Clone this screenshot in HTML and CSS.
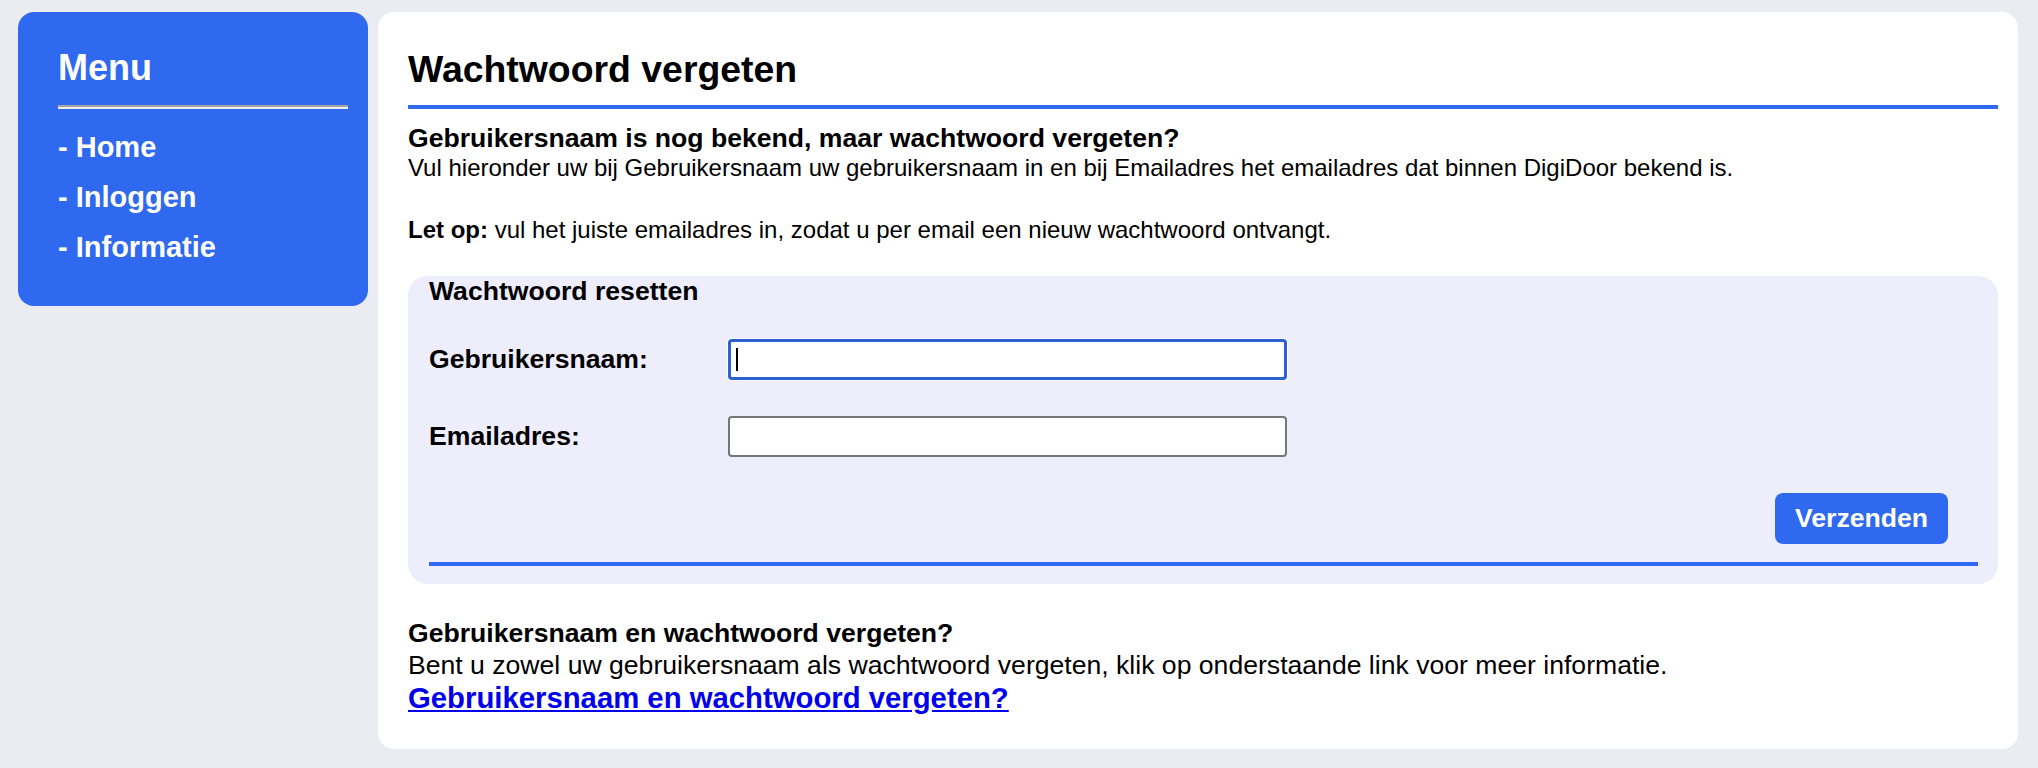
FILE: index.html
```html
<!DOCTYPE html>
<html lang="nl">
<head>
  <meta charset="UTF-8" />
  <title>Wachtwoord vergeten</title>
  <link rel="stylesheet" href="styles.css">
</head>
<body>

<nav class="sidebar">
  <h2>Menu</h2>
  <hr />
  <ul>
    <li><a href="#">- Home</a></li>
    <li><a href="#">- Inloggen</a></li>
    <li><a href="#">- Informatie</a></li>
  </ul>
</nav>

<main class="content">
  <h1>Wachtwoord vergeten</h1>

  <section class="intro">
    <h3>Gebruikersnaam is nog bekend, maar wachtwoord vergeten?</h3>
    <p>Vul hieronder uw bij Gebruikersnaam uw gebruikersnaam in en bij Emailadres het emailadres dat binnen DigiDoor bekend is.</p>
    <p class="note"><b>Let op:</b> vul het juiste emailadres in, zodat u per email een nieuw wachtwoord ontvangt.</p>
  </section>

  <form class="reset-box" onsubmit="return false">
    <div class="box-title">Wachtwoord resetten</div>
    <div class="row">
      <label for="username">Gebruikersnaam:</label>
      <div class="field">
        <input type="text" id="username" class="focused" />
        <span class="caret"></span>
      </div>
    </div>
    <div class="row">
      <label for="email">Emailadres:</label>
      <div class="field">
        <input type="text" id="email" />
      </div>
    </div>
    <div class="actions">
      <button type="submit">Verzenden</button>
    </div>
    <div class="box-line"></div>
  </form>

  <section class="forgot-both">
    <h3>Gebruikersnaam en wachtwoord vergeten?</h3>
    <p>Bent u zowel uw gebruikersnaam als wachtwoord vergeten, klik op onderstaande link voor meer informatie.</p>
    <a href="#">Gebruikersnaam en wachtwoord vergeten?</a>
  </section>
</main>

</body>
</html>
```

FILE: styles.css
```css
body {
  font-family: 'Liberation Sans', Arial, sans-serif;
  margin: 0;
  padding: 12px 20px 0 18px;
  background: #ebecf1;
  color: #000;
  display: flex;
  align-items: flex-start;
  gap: 10px;
}

/* menu links */
.sidebar {
  width: 350px;
  box-sizing: border-box;
  background: #2e69ef;
  color: white;
  border-radius: 16px;
  padding: 35px 20px 34px 40px;
}
.sidebar h2 {
  margin: 0;
  font-size: 36px;
  font-weight: bold;
}
.sidebar hr {
  height: 0;
  margin: 16px 0 13px;
  border: none;
  border-top: 2px solid #a3a3a3;
  border-bottom: 2px solid #efefef;
}
.sidebar ul {
  list-style: none;
  margin: 0;
  padding: 0;
}
.sidebar li {
  line-height: 50px;
  font-size: 29px;
  font-weight: bold;
}
.sidebar a {
  color: white;
  text-decoration: none;
}

/* inhoud */
.content {
  flex: 1;
  background: white;
  border-radius: 16px;
  padding: 36px 20px 34px 30px;
}
.content h1 {
  margin: 0;
  font-size: 37.4px;
  padding-bottom: 14px;
  border-bottom: 4px solid #2e69ef;
}
.intro {
  margin-top: 14px;
}
h3 {
  margin: 0;
  font-size: 26.6px;
}
p {
  margin: 0;
  font-size: 24px;
}
p.note {
  margin-top: 34px;
}

.reset-box {
  margin-top: 32px;
  background: #eeedfc;
  border-radius: 20px;
  padding: 0 20px 18px 21px;
}
.box-title {
  font-size: 26.6px;
  font-weight: bold;
}
.row {
  display: grid;
  grid-template-columns: 299px 559px;
  align-items: center;
  margin-top: 32px;
}
.row + .row {
  margin-top: 36px;
}
.row label {
  font-size: 26.6px;
  font-weight: bold;
}
.field {
  position: relative;
}
.field input {
  display: block;
  width: 100%;
  height: 41px;
  box-sizing: border-box;
  border: 2px solid #767676;
  border-radius: 4px;
  background: white;
  font-size: 20px;
  padding: 0 6px;
  outline: none;
}
.field input.focused {
  border: 3px solid #2b62cf;
  box-shadow: 0 0 0 1px #fff;
}
.caret {
  position: absolute;
  left: 8px;
  top: 9px;
  width: 2px;
  height: 23px;
  background: #000;
}
.actions {
  display: flex;
  justify-content: flex-end;
  margin-top: 36px;
  padding-right: 30px;
}
.actions button {
  font-family: inherit;
  font-size: 26.6px;
  font-weight: bold;
  color: white;
  background: #2e69ef;
  border: none;
  border-radius: 8px;
  padding: 10px 20px;
  cursor: pointer;
}
.box-line {
  margin-top: 18px;
  height: 4px;
  background: #2e69ef;
}

.forgot-both {
  margin-top: 33.5px;
}
.forgot-both p {
  font-size: 26.6px;
  line-height: 32px;
}
.forgot-both a {
  font-size: 29.3px;
  font-weight: bold;
  color: #0000ee;
}
```
